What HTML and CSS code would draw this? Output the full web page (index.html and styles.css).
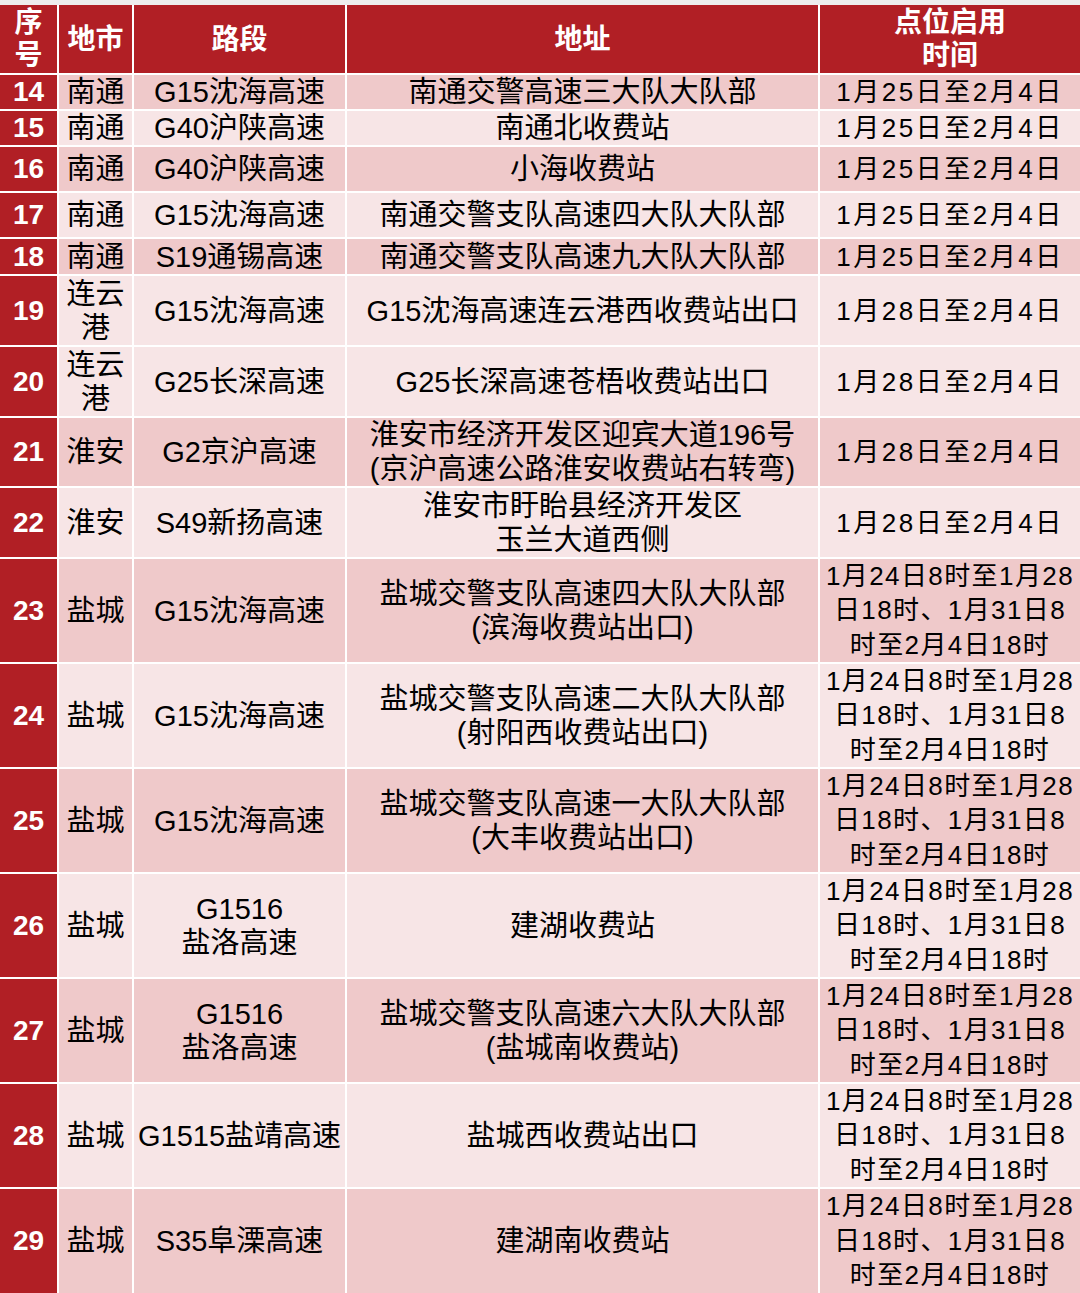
FILE: index.html
```html
<!DOCTYPE html>
<html lang="zh-CN">
<head>
<meta charset="utf-8">
<title>点位表</title>
<link rel="stylesheet" href="styles.css">
</head>
<body>
<div class="topstrip"></div>
<div class="sheet">
  <div class="row head">
    <div class="c">序<br>号</div>
    <div class="c">地市</div>
    <div class="c">路段</div>
    <div class="c">地址</div>
    <div class="c">点位启用<br>时间</div>
  </div>
  <div class="row dark">
    <div class="c no">14</div><div class="c">南通</div><div class="c">G15沈海高速</div><div class="c">南通交警高速三大队大队部</div><div class="c date">1月25日至2月4日</div>
  </div>
  <div class="row light">
    <div class="c no">15</div><div class="c">南通</div><div class="c">G40沪陕高速</div><div class="c">南通北收费站</div><div class="c date">1月25日至2月4日</div>
  </div>
  <div class="row dark">
    <div class="c no">16</div><div class="c">南通</div><div class="c">G40沪陕高速</div><div class="c">小海收费站</div><div class="c date">1月25日至2月4日</div>
  </div>
  <div class="row light">
    <div class="c no">17</div><div class="c">南通</div><div class="c">G15沈海高速</div><div class="c">南通交警支队高速四大队大队部</div><div class="c date">1月25日至2月4日</div>
  </div>
  <div class="row dark">
    <div class="c no">18</div><div class="c">南通</div><div class="c">S19通锡高速</div><div class="c">南通交警支队高速九大队大队部</div><div class="c date">1月25日至2月4日</div>
  </div>
  <div class="row light">
    <div class="c no">19</div><div class="c">连云<br>港</div><div class="c">G15沈海高速</div><div class="c">G15沈海高速连云港西收费站出口</div><div class="c date">1月28日至2月4日</div>
  </div>
  <div class="row light">
    <div class="c no">20</div><div class="c">连云<br>港</div><div class="c">G25长深高速</div><div class="c">G25长深高速苍梧收费站出口</div><div class="c date">1月28日至2月4日</div>
  </div>
  <div class="row dark">
    <div class="c no">21</div><div class="c">淮安</div><div class="c">G2京沪高速</div><div class="c">淮安市经济开发区迎宾大道196号<br>(京沪高速公路淮安收费站右转弯)</div><div class="c date">1月28日至2月4日</div>
  </div>
  <div class="row light">
    <div class="c no">22</div><div class="c">淮安</div><div class="c">S49新扬高速</div><div class="c">淮安市盱眙县经济开发区<br>玉兰大道西侧</div><div class="c date">1月28日至2月4日</div>
  </div>
  <div class="row dark">
    <div class="c no">23</div><div class="c">盐城</div><div class="c">G15沈海高速</div><div class="c">盐城交警支队高速四大队大队部<br>(滨海收费站出口)</div><div class="c long">1月24日8时至1月28<br>日18时、1月31日8<br>时至2月4日18时</div>
  </div>
  <div class="row light">
    <div class="c no">24</div><div class="c">盐城</div><div class="c">G15沈海高速</div><div class="c">盐城交警支队高速二大队大队部<br>(射阳西收费站出口)</div><div class="c long">1月24日8时至1月28<br>日18时、1月31日8<br>时至2月4日18时</div>
  </div>
  <div class="row dark">
    <div class="c no">25</div><div class="c">盐城</div><div class="c">G15沈海高速</div><div class="c">盐城交警支队高速一大队大队部<br>(大丰收费站出口)</div><div class="c long">1月24日8时至1月28<br>日18时、1月31日8<br>时至2月4日18时</div>
  </div>
  <div class="row light">
    <div class="c no">26</div><div class="c">盐城</div><div class="c">G1516<br>盐洛高速</div><div class="c">建湖收费站</div><div class="c long">1月24日8时至1月28<br>日18时、1月31日8<br>时至2月4日18时</div>
  </div>
  <div class="row dark">
    <div class="c no">27</div><div class="c">盐城</div><div class="c">G1516<br>盐洛高速</div><div class="c">盐城交警支队高速六大队大队部<br>(盐城南收费站)</div><div class="c long">1月24日8时至1月28<br>日18时、1月31日8<br>时至2月4日18时</div>
  </div>
  <div class="row light">
    <div class="c no">28</div><div class="c">盐城</div><div class="c">G1515盐靖高速</div><div class="c">盐城西收费站出口</div><div class="c long">1月24日8时至1月28<br>日18时、1月31日8<br>时至2月4日18时</div>
  </div>
  <div class="row dark">
    <div class="c no">29</div><div class="c">盐城</div><div class="c">S35阜溧高速</div><div class="c">建湖南收费站</div><div class="c long">1月24日8时至1月28<br>日18时、1月31日8<br>时至2月4日18时</div>
  </div>
</div>
</body>
</html>
```

FILE: styles.css
```css
html, body {
  margin: 0;
  padding: 0;
  background: #ffffff;
}

body {
  width: 1080px;
  height: 1293px;
  overflow: hidden;
  font-family: "Liberation Sans", "Noto Sans CJK SC", sans-serif;
  color: #000000;
}

.topstrip {
  height: 5px;
  background: #eeeded;
}

.sheet {
  display: grid;
  grid-template-columns: 57px 73px 211px 471px 260px;
  grid-template-rows: 68px 34px 34px 44px 44px 35px 69px 69px 68px 69px 103px 103px 103px 103px 103px 103px 104px;
  column-gap: 2px;
  row-gap: 2px;
  background: #ffffff;
}

.row {
  display: contents;
}

.c {
  display: flex;
  align-items: center;
  justify-content: center;
  text-align: center;
  font-size: 29px;
  line-height: 34px;
  white-space: nowrap;
  overflow: hidden;
}

.row.dark .c {
  background: #efc9ca;
}

.row.light .c {
  background: #f7e5e6;
}

.row.head .c {
  background: #b11f25;
  color: #ffffff;
  font-weight: bold;
  font-size: 28px;
  line-height: 33px;
}

.row .c.no {
  background: #b11f25;
  color: #ffffff;
  font-weight: bold;
  font-size: 28px;
}

.c.date {
  font-size: 26px;
  letter-spacing: 2.5px;
}

.c.long {
  font-size: 26px;
  letter-spacing: 1.4px;
  line-height: 34.5px;
}
```
